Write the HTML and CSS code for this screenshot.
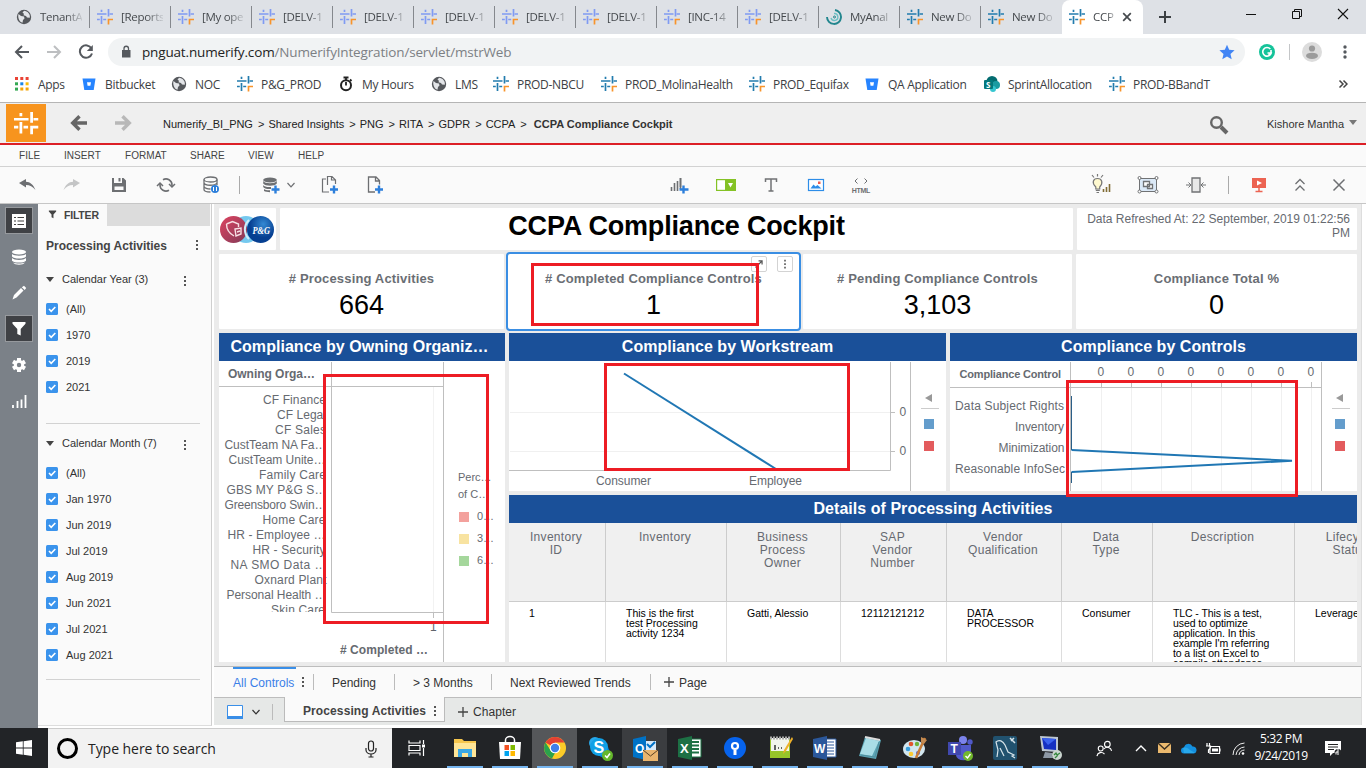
FILE: index.html
```html
<!DOCTYPE html>
<html lang="en">
<head>
<meta charset="utf-8">
<title>CCPA Compliance Cockpit</title>
<link rel="stylesheet" href="styles.css">
</head>
<body>
<svg class="defs" width="0" height="0">
  <symbol id="hash" viewBox="0 0 16 16"><g fill="none" stroke="currentColor" stroke-width="1.700"><path d="M0 5h9.500M12.700 5H16M4.500.7v2.200M4.500 7v8M11.500 0v7.500M0 10.500h2.800M6.200 10.500h3"/><path class="corner" d="M16 10.500h-4.500V15.500"/></g></symbol>
  <symbol id="globe" viewBox="0 0 16 16"><circle cx="8" cy="8" r="7.200" fill="#55585c"/><path d="M2.500 5l2.500 2 3 .5.500 2-1.500 1.500-.5 2.800C3.500 13 1.500 9 2.500 5zM8 1.800l-1.500 2 1.500 1-.5 1.500 2.500.7 1 1.500 2.800.3C14.500 5 11.500 2 8 1.800z" fill="#e3e5e8"/></symbol>
  <symbol id="bucket" viewBox="0 0 16 16"><path d="M1.500 2.500h13L12.700 14H3.300z" fill="#2684ff"/><path d="M6 6.200h4l-.6 3.600H6.600z" fill="#fff"/></symbol>
  <symbol id="plus" viewBox="0 0 10 10"><path d="M5 0v10M0 5h10" stroke="currentColor" stroke-width="1.300"/></symbol>
  <symbol id="dots" viewBox="0 0 4 14"><path d="M1 2h2v2H1zM1 6h2v2H1zM1 10h2v2H1z" fill="currentColor"/></symbol>
  <symbol id="check" viewBox="0 0 12 12"><rect width="12" height="12" rx="1.500" fill="#3a93ec"/><path d="M3 6l2.200 2.300L9.300 4" fill="none" stroke="#fff" stroke-width="1.600"/></symbol>
  <symbol id="chev" viewBox="0 0 10 10"><path d="M1.500 3L5 6.800 8.500 3" fill="none" stroke="currentColor" stroke-width="1.200"/></symbol>
  <symbol id="arrow" viewBox="0 0 16 16"><path d="M15 8H2M8 2L2 8l6 6" fill="none" stroke="currentColor" stroke-width="2"/></symbol>
  <symbol id="fatarrow" viewBox="0 0 18 18"><path d="M17 9H3M9.500 2.200L2.700 9l6.800 6.800" fill="none" stroke="currentColor" stroke-width="3.400"/></symbol>
  <symbol id="funnel" viewBox="0 0 16 16"><path d="M1.500 1h13v1.800L9.700 8v6.500L6.300 13V8L1.500 2.800z" fill="currentColor"/></symbol>
</svg>

<header class="tabs">
  <div class="tab"><svg><use href="#globe"/></svg><span>TenantA</span></div>
  <div class="tab pale"><svg><use href="#hash"/></svg><span>[Reports</span></div>
  <div class="tab pale"><svg><use href="#hash"/></svg><span>[My ope</span></div>
  <div class="tab pale"><svg><use href="#hash"/></svg><span>[DELV-1</span></div>
  <div class="tab pale"><svg><use href="#hash"/></svg><span>[DELV-1</span></div>
  <div class="tab pale"><svg><use href="#hash"/></svg><span>[DELV-1</span></div>
  <div class="tab pale"><svg><use href="#hash"/></svg><span>[DELV-1</span></div>
  <div class="tab pale"><svg><use href="#hash"/></svg><span>[DELV-1</span></div>
  <div class="tab pale"><svg><use href="#hash"/></svg><span>[INC-14</span></div>
  <div class="tab pale"><svg><use href="#hash"/></svg><span>[DELV-1</span></div>
  <div class="tab"><svg viewBox="0 0 16 16"><g fill="none" stroke="#22868e"><path d="M1 8a7 7 0 1 0 8-7" stroke-width="1.900"/><path d="M5 9a3.500 3.500 0 1 0 3-4.500" stroke="#6bc0c5" stroke-width="1.400"/><circle cx="8.500" cy="8" r="1"/></g></svg><span>MyAnal</span></div>
  <div class="tab"><svg><use href="#hash"/></svg><span>New Do</span></div>
  <div class="tab last"><svg><use href="#hash"/></svg><span>New Do</span></div>
  <div class="tab active"><svg><use href="#hash"/></svg><span>CCP</span><svg class="shut" viewBox="0 0 10 10"><path d="M1.200 1.200l7.600 7.600M8.800 1.200L1.200 8.800" stroke="#45494d" stroke-width="1.700"/></svg></div>
  <svg class="newtab" viewBox="0 0 12 12"><path d="M6 0v12M0 6h12" stroke="#3c4043" stroke-width="2"/></svg>
  <div class="wincontrols">
    <svg viewBox="0 0 12 12"><path d="M1 6.500h10" stroke="#111"/></svg>
    <svg viewBox="0 0 12 12"><path d="M1.500 3.500h7v7h-7zM3.500 3V1.500h7v7H9" fill="none" stroke="#111"/></svg>
    <svg viewBox="0 0 12 12"><path d="M1 1l10 10M11 1L1 11" stroke="#111" stroke-width="1.100"/></svg>
  </div>
</header>

<div class="address">
  <svg class="nav"><use href="#arrow"/></svg>
  <svg class="nav fwd"><use href="#arrow"/></svg>
  <svg class="nav reload" viewBox="0 0 16 16"><path d="M13.500 4.500A6.200 6.200 0 1 0 14 9.500" fill="none" stroke="#55595e" stroke-width="2"/><path d="M14.800 1v6h-6z" fill="#55595e"/></svg>
  <div class="pill">
    <svg class="lock" viewBox="0 0 10 13"><path d="M1 5h8.500v7.500H1z" fill="#55595e"/><path d="M3 5V3.500a2.200 2.200 0 0 1 4.500 0V5" fill="none" stroke="#55595e" stroke-width="1.300"/></svg>
    <span class="url"><b>pnguat.numerify.com</b>/NumerifyIntegration/servlet/mstrWeb</span>
    <svg class="star" viewBox="0 0 16 16"><path d="M8 .8l2.200 5 5.400.5-4.100 3.600 1.200 5.300L8 12.400l-4.700 2.800 1.200-5.300L.4 6.300l5.400-.5z" fill="#4285f4"/></svg>
  </div>
  <svg class="gram" viewBox="0 0 16 16"><circle cx="8" cy="8" r="8" fill="#15c39a"/><path d="M11.300 5A4.300 4.300 0 1 0 12.200 9H8.500M12 6v3l-2.500 2" fill="none" stroke="#fff" stroke-width="1.600"/></svg>
  <i class="vline"></i>
  <svg class="avatar" viewBox="0 0 20 20"><circle cx="10" cy="10" r="10" fill="#dcdcdc"/><circle cx="10" cy="6.500" r="3.100" fill="#9b9b9b"/><ellipse cx="10" cy="13.800" rx="6" ry="3.100" fill="#9b9b9b"/></svg>
  <svg class="kebab" viewBox="0 0 4 14"><g fill="#55595e"><circle cx="2" cy="2" r="1.700"/><circle cx="2" cy="7" r="1.700"/><circle cx="2" cy="12" r="1.700"/></g></svg>
</div>

<nav class="bookmarks">
  <div><svg viewBox="0 0 16 16"><g><path d="M1 1h3v3H1z" fill="#ea4335"/><path d="M6.300 1h3v3h-3z" fill="#ea4335"/><path d="M11.600 1h3v3h-3z" fill="#ea4335"/><path d="M1 6.300h3v3H1z" fill="#34a853"/><path d="M6.300 6.300h3v3h-3z" fill="#1a86e8"/><path d="M11.600 6.300h3v3h-3z" fill="#fbbc05"/><path d="M1 11.600h3v3H1z" fill="#34a853"/><path d="M6.300 11.600h3v3h-3zM11.600 11.600h3v3h-3z" fill="#f4a508"/></g></svg>Apps</div>
  <div><svg><use href="#bucket"/></svg>Bitbucket</div>
  <div><svg><use href="#globe"/></svg>NOC</div>
  <div><svg><use href="#hash"/></svg>P&amp;G_PROD</div>
  <div><svg viewBox="0 0 16 16"><circle cx="8" cy="9.300" r="5" fill="none" stroke="#222" stroke-width="2"/><path d="M8 6v3.500M5.500 1.500h5M8 1.500v2.500M12 3.500l1.500 1.500" stroke="#222" stroke-width="1.800"/></svg>My Hours</div>
  <div><svg><use href="#globe"/></svg>LMS</div>
  <div><svg><use href="#hash"/></svg>PROD-NBCU</div>
  <div><svg><use href="#hash"/></svg>PROD_MolinaHealth</div>
  <div><svg><use href="#hash"/></svg>PROD_Equifax</div>
  <div><svg><use href="#bucket"/></svg>QA Application</div>
  <div><svg viewBox="0 0 16 16"><circle cx="8" cy="5.500" r="5.500" fill="#036c70"/><circle cx="12" cy="9" r="4" fill="#1a9ba1"/><circle cx="9" cy="13" r="3" fill="#37c6d0"/><rect y="4" width="9" height="9" rx="1" fill="#03787c"/><text class="sp" x="2" y="11.500" font-size="8" font-weight="bold">S</text></svg>SprintAllocation</div>
  <div><svg><use href="#hash"/></svg>PROD-BBandT</div>
  <svg class="more" viewBox="0 0 10 10"><path d="M1.500 1.500L5 5 1.500 8.500M5.500 1.500L9 5 5.500 8.500" fill="none" stroke="#444" stroke-width="1.500"/></svg>
</nav>

<div class="appbar">
  <svg class="brand" viewBox="0 0 40 38"><rect width="40" height="38" fill="#f7941e"/><svg x="8" y="8" width="24.500" height="23" viewBox="0 0 16 16" preserveAspectRatio="none"><path d="M0 5h9.500M12.700 5H16M4.500.7v2.200M4.500 7v8M11.500 0v7.500M0 10.500h2.800M6.200 10.500h3M16 10.500h-4.500V15.500" fill="none" stroke="#fff" stroke-width="1.800"/></svg></svg>
  <svg class="back"><use href="#fatarrow"/></svg>
  <svg class="back next"><use href="#fatarrow"/></svg>
  <div class="crumbs"><span>Numerify_BI_PNG</span><i>&gt;</i><span>Shared Insights</span><i>&gt;</i><span>PNG</span><i>&gt;</i><span>RITA</span><i>&gt;</i><span>GDPR</span><i>&gt;</i><span>CCPA</span><i>&gt;</i><b>CCPA Compliance Cockpit</b></div>
  <svg class="search" viewBox="0 0 20 20"><circle cx="7.500" cy="7.500" r="5.300" fill="none" stroke="#666" stroke-width="2.400"/><path d="M12 12l6 6" stroke="#666" stroke-width="4"/></svg>
  <span class="user">Kishore Mantha</span><i class="caret"></i>
</div>

<div class="menubar"><span>FILE</span><span>INSERT</span><span>FORMAT</span><span>SHARE</span><span>VIEW</span><span>HELP</span></div>

<div class="toolbar">
  <svg viewBox="0 0 20 20"><path d="M2 8l7-4v2.700c4 0 7.500 3 9.500 8.300C15.500 11.800 13 10 9 10v2.500z" fill="#6d6f72"/></svg>
  <svg viewBox="0 0 20 20"><path d="M18 8l-7-4v2.700C7 6.700 3.500 9.700 1.500 15c3-3.200 5.500-5 9.500-5v2.500z" fill="#c4c5c6"/></svg>
  <svg viewBox="0 0 20 20"><path d="M3 3h2v5h8V3h1.500L17 5.500V17H3z" fill="#6d6f72"/><path d="M9.500 3h2v3.500h-2z" fill="#6d6f72"/><path d="M5.500 11.500h9V15h-9z" fill="#fafafa"/></svg>
  <svg viewBox="0 0 20 20"><g fill="none" stroke="#6d6f72" stroke-width="1.600"><path d="M7 4.700A6 6 0 0 1 16 10v1.500M13 15.300A6 6 0 0 1 4 10V8.500"/><path d="M13 9l3 3 3-3M7 11L4 8l-3 3" stroke-width="1.500"/></g></svg>
  <svg viewBox="0 0 20 20"><g fill="none" stroke="#6d6f72" stroke-width="1.300"><ellipse cx="9.500" cy="4.500" rx="6.500" ry="2.500"/><path d="M3 4.500v10c0 1.500 3 2.500 6.500 2.500M16 4.500V10M3 8c1 3 11 3 13 0M3 11.500c1 2 4 2.500 6.500 2.500"/></g><circle cx="14" cy="14" r="4" fill="#2d7fdb"/><path d="M12.500 12v4M15.500 12v4" stroke="#fff"/></svg>
  <i class="sep"></i>
  <svg viewBox="0 0 20 20"><ellipse cx="9" cy="5" rx="6.800" ry="2.600" fill="#6d6f72"/><path d="M2.200 6c2 3 11.500 3 13.600 0v2.500c-2 3-11.500 3-13.600 0zM2.200 10c1 1.800 4 2.200 7.800 2v2c-4 .3-7-.5-7.800-2zM3 14c1 1 4 1.500 6 1.200v2c-2 0-5-.5-6-1.200z" fill="#6d6f72"/><path d="M14.500 10.500v8M10.500 14.500h8" stroke="#2d7fdb" stroke-width="2.400"/></svg>
  <svg class="small"><use href="#chev"/></svg>
  <svg viewBox="0 0 20 20"><path d="M9 17H2.500V4H6M7.500 10V1.500H12L15.500 5v4M11.500 1.500V5H15" fill="none" stroke="#6d6f72" stroke-width="1.200"/><path d="M14 10.500v8M10 14.500h8" stroke="#2d7fdb" stroke-width="2.400"/></svg>
  <svg viewBox="0 0 20 20"><path d="M10 17H3.500V2H11l3.500 3.500v4M10.500 2v4h4" fill="none" stroke="#6d6f72" stroke-width="1.300"/><path d="M14 10.500v8M10 14.500h8" stroke="#2d7fdb" stroke-width="2.400"/></svg>
  <svg viewBox="0 0 20 20"><path d="M1.500 16v-4M4.500 16V8M7.500 16V6M10.500 12V3" stroke="#6d6f72" stroke-width="1.600"/><path d="M10.500 3V14" stroke="#6d6f72" stroke-width="1.600"/><path d="M13.500 10.500v8M9.500 14.500h9" stroke="#2d7fdb" stroke-width="2.400"/></svg>
  <svg viewBox="0 0 20 20"><rect x=".6" y="4.600" width="18.800" height="10.800" fill="#fff" stroke="#84c225" stroke-width="1.200"/><path d="M9 4h11v12H9z" fill="#84c225"/><path d="M12 8h5l-2.500 4.500z" fill="#fff"/></svg>
  <svg viewBox="0 0 20 20"><path d="M4.500 7V4h11v3M10 4v12M7.500 16h5" fill="none" stroke="#707274" stroke-width="1.500"/></svg>
  <svg viewBox="0 0 20 20"><rect x="2.500" y="4.500" width="15" height="11" fill="#fff" stroke="#2d8de8" stroke-width="1.200"/><path d="M4.500 13.500l3-4 2 2 2-1.500 4 3.500z" fill="#2d8de8"/><path d="M12 6.500h2.500V9H12z" fill="#ef5b4d"/></svg>
  <svg viewBox="0 0 20 20"><path d="M6.500 3.500L4 6l2.500 2.500M13.500 3.500L16 6l-2.500 2.500" fill="none" stroke="#6d6f72"/><text x=".8" y="18" font-size="7" font-weight="bold" fill="#6d6f72" textLength="18.500">HTML</text></svg>
  <svg viewBox="0 0 20 20"><path d="M4.800 12C.5 8 2 3.500 6.500 3.500S12.500 8 8.700 12v2H4.800z" fill="#fff9cf" stroke="#777" stroke-width="1.200"/><path d="M4.800 15.300h4M5.500 17.500h2.500M6.500 1.500V-1M3 2.500L1 0M10 2.500l2-2.500" stroke="#777" stroke-width="1.200"/><path d="M12.500 17v-3M15.500 17v-5M18.500 17V9" stroke="#806c35" stroke-width="1.600"/></svg>
  <svg class="wide" viewBox="0 0 22 20"><rect x="2.500" y="3.500" width="17" height="13" fill="#dbe9f7" stroke="#707274"/><path d="M6.500 6.500h6v5h-6zM10.500 9.500h5v4h-5z" fill="#fff" stroke="#707274" stroke-width="1.300"/><g fill="#fff" stroke="#707274"><circle cx="2.500" cy="3" r="1.500"/><circle cx="19.500" cy="3" r="1.500"/><circle cx="2.500" cy="16.500" r="1.500"/><circle cx="19.500" cy="16.500" r="1.500"/></g></svg>
  <svg viewBox="0 0 20 20"><path d="M6 3h8v14H6z" fill="#e8e8e8" stroke="#707274" stroke-width="1.300"/><path d="M0 10h4M2.500 7.500L5 10l-2.500 2.500M20 10h-4M17.500 7.500L15 10l2.500 2.500" fill="none" stroke="#707274"/></svg>
  <i class="sep two"></i>
  <svg viewBox="0 0 20 20"><path d="M3 3h14v10H3z" fill="#ec6352"/><path d="M8 5.500l5 2.500-5 2.500z" fill="#fff"/><path d="M10 13v3.500M6.500 16.500h7" stroke="#ec6352" stroke-width="1.500"/></svg>
  <svg viewBox="0 0 20 20"><path d="M5.500 9L10 4.500 14.500 9M5.500 15.500L10 11l4.500 4.500" fill="none" stroke="#6d6f72" stroke-width="1.300"/></svg>
  <svg viewBox="0 0 20 20"><path d="M4.500 4.500l11 11M15.500 4.500l-11 11" stroke="#6d6f72" stroke-width="1.500"/></svg>
</div>

<div class="workspace">
  <aside class="rail">
    <div class="on"><svg viewBox="0 0 16 16"><path d="M1 1h14v14H1z" fill="#fff"/><path d="M3 4.500h2M6.500 4.500H13M3 8h2M6.500 8H13M3 11.500h2M6.500 11.500H13" stroke="#444" stroke-width="1.200"/></svg></div>
    <div><svg viewBox="0 0 16 16"><g fill="#fff"><ellipse cx="8" cy="3" rx="7" ry="2.500"/><path d="M1 5c2 2.300 12 2.300 14 0v2.500c-2 2.800-12 2.800-14 0zM1 9c2 2.500 12 2.500 14 0v2.700c-2 2.500-12 2.500-14 0zM2 13.500c3 1.300 9 1.300 12 0-2 3-10 3-12 0z"/></g></svg></div>
    <div><svg viewBox="0 0 16 16"><path d="M1.500 14.500l1.500-4.500 7-7 2.500 2.500-7 7zM10.800 2.200L13 .8 15.200 3l-1.500 2z" fill="#fff"/></svg></div>
    <div class="on"><svg color="#fff"><use href="#funnel"/></svg></div>
    <div><svg viewBox="0 0 16 16"><path d="M8 1v14M2 4.500l12 7M2 11.500l12-7" stroke="#fff" stroke-width="4"/><circle cx="8" cy="8" r="5.200" fill="#fff"/><circle cx="8" cy="8" r="2.200" fill="#7b8188"/></svg></div>
    <div><svg viewBox="0 0 16 16"><path d="M2 15v-3M6.500 15V8M10.500 15V6.500M14.500 15V2" stroke="#fff" stroke-width="1.800"/></svg></div>
  </aside>

  <section class="filter">
    <div class="ftop"><div class="ftab"><svg><use href="#funnel"/></svg>FILTER</div></div>
    <div class="ftitle">Processing Activities<svg class="kd"><use href="#dots"/></svg></div>
    <div class="fgroup">
      <div class="fhead"><i></i>Calendar Year (3)<svg class="kd"><use href="#dots"/></svg></div>
      <label><svg><use href="#check"/></svg>(All)</label>
      <label><svg><use href="#check"/></svg>1970</label>
      <label><svg><use href="#check"/></svg>2019</label>
      <label><svg><use href="#check"/></svg>2021</label>
    </div>
    <div class="fgroup month">
      <div class="fhead"><i></i>Calendar Month (7)<svg class="kd"><use href="#dots"/></svg></div>
      <label><svg><use href="#check"/></svg>(All)</label>
      <label><svg><use href="#check"/></svg>Jan 1970</label>
      <label><svg><use href="#check"/></svg>Jun 2019</label>
      <label><svg><use href="#check"/></svg>Jul 2019</label>
      <label><svg><use href="#check"/></svg>Aug 2019</label>
      <label><svg><use href="#check"/></svg>Jun 2021</label>
      <label><svg><use href="#check"/></svg>Jul 2021</label>
      <label><svg><use href="#check"/></svg>Aug 2021</label>
    </div>
  </section>

  <main class="stage">
    <div class="board">
      <div class="row r1">
        <div class="card logo"><svg viewBox="0 0 57 42">
          <defs><linearGradient id="red" x2="1" y2="1"><stop offset="0" stop-color="#de4360"/><stop offset="1" stop-color="#813b58"/></linearGradient><radialGradient id="blue" cx=".6" cy=".3"><stop offset="0" stop-color="#3489d3"/><stop offset="1" stop-color="#063f91"/></radialGradient></defs>
          <circle cx="27" cy="21.500" r="13.500" fill="#75c9ef"/><circle cx="14.500" cy="21.500" r="13.500" fill="url(#red)"/><circle cx="41.500" cy="21.500" r="13.500" fill="url(#blue)"/><path d="M30 12a13 13 0 0 0 0 19" fill="none" stroke="#d1edfa" stroke-width="2"/>
          <path d="M7.500 16l6-2.500 6 2.500v3M7.500 16c0 5 2 9 7.500 12M16 21l6-1v6l-5 2zM18 24l3-1" fill="none" stroke="#f7dfe4" stroke-width="1.400"/>
          <text x="33.500" y="25.500" font-size="10" font-weight="bold" font-style="italic" font-family="Liberation Serif, serif" fill="#fff" textLength="17.500" lengthAdjust="spacingAndGlyphs">P&amp;G</text></svg></div>
        <div class="card title">CCPA Compliance Cockpit</div>
        <div class="card date">Data Refreshed At: 22 September, 2019 01:22:56 PM</div>
      </div>
      <div class="row r2">
        <div class="card kpi k1"><b>#&nbsp;Processing Activities</b><span>664</span></div>
        <div class="card kpi k2 selected"><b>#&nbsp;Completed Compliance Controls</b><span>1</span>
          <div class="kbtns"><svg viewBox="0 0 16 16"><path d="M4 12l7-7M7.500 4.500h4v4" fill="none" stroke="#555" stroke-width="1.400"/></svg><svg viewBox="0 0 16 16"><path d="M7 3h2v2H7zM7 7h2v2H7zM7 11h2v2H7z" fill="#666"/></svg></div>
          <div class="mark m1"></div></div>
        <div class="card kpi k3"><b>#&nbsp;Pending Compliance Controls</b><span>3,103</span></div>
        <div class="card kpi k4"><b>Compliance Total %</b><span>0</span></div>
      </div>
      <div class="row r3">
        <section class="panel owning"><h2>Compliance by Owning Organiz…</h2>
          <svg class="chart" viewBox="219 361 286 301" width="286" height="301">
            <path d="M219 386.500h224M331.500 362v250.500H443M443.500 362v300M433.500 612v6" fill="none" stroke="#bfbfbf"/><path d="M433.500 387v225" stroke="#f2f2f2"/>
            <text class="hd" x="228" y="378" textLength="87">Owning Orga…</text>
            <clipPath id="rows"><path d="M219 380h109v232H219z"/></clipPath>
            <g class="lbl" clip-path="url(#rows)"><text x="263" y="404" textLength="63">CF Finance</text><text x="277" y="419" textLength="49">CF Legal</text><text x="275" y="434" textLength="51">CF Sales</text><text x="224.500" y="449" textLength="102">CustTeam NA Fa…</text><text x="228.500" y="464" textLength="97">CustTeam Unite…</text><text x="259" y="479" textLength="67">Family Care</text><text x="226.500" y="494" textLength="100">GBS MY P&amp;G S…</text><text x="224.500" y="509" textLength="102">Greensboro Swin…</text><text x="262.500" y="524" textLength="63">Home Care</text><text x="227.500" y="539" textLength="98">HR - Employee …</text><text x="252.500" y="554" textLength="73">HR - Security</text><text x="230.500" y="569" textLength="96">NA SMO Data …</text><text x="254.500" y="584" textLength="72">Oxnard Plant</text><text x="226.500" y="599" textLength="100">Personal Health …</text><text x="271" y="614" textLength="54">Skin Care</text></g>
            <text class="hd" x="340" y="654" textLength="88"># Completed …</text>
            <text x="430" y="631" font-size="12" fill="#60656b">1</text>
            <g font-size="11" fill="#666a70"><text x="458" y="481">Perc…</text><text x="458" y="498">of C…</text><text x="477" y="520">0…</text><text x="477" y="542">3…</text><text x="477" y="564">6…</text></g>
            <path d="M459 512h10v10h-10z" fill="#f3a19d"/><path d="M459 534h10v10h-10z" fill="#f8e3a1"/><path d="M459 556h10v10h-10z" fill="#a5d79c"/>
          </svg><div class="mark m2"></div>
        </section>
        <div class="right">
          <div class="charts">
            <section class="panel stream"><h2>Compliance by Workstream</h2>
              <svg class="chart" viewBox="509 361 437 130" width="437" height="130">
                <path d="M510 412.500h380M510 451.500h380" stroke="#f0f0f0"/><path d="M509 470.500h381.500V362M890 412.500h5M890 451.500h5M910.500 362v129" fill="none" stroke="#bfbfbf"/>
                <path d="M624 373.500L776 469" stroke="#2077b4" stroke-width="2"/>
                <g class="lbl"><text x="596" y="485" textLength="55">Consumer</text><text x="749" y="485" textLength="53">Employee</text><text x="899.500" y="416">0</text><text x="899.500" y="455">0</text></g>
                <path d="M925 398l7-4v8z" fill="#999"/><path d="M921 408.500h18" stroke="#ccc"/><path d="M924 419h10v10h-10z" fill="#649dcc"/><path d="M924 441h10v10h-10z" fill="#e35b5d"/>
              </svg><div class="mark m3"></div>
            </section>
            <section class="panel controls"><h2>Compliance by Controls</h2>
              <svg class="chart" viewBox="950 361 407 130" width="407" height="130">
                <path d="M1101.500 388v103M1131.500 388v103M1161.500 388v103M1191.500 388v103M1221.500 388v103M1251.500 388v103M1281.500 388v103M1311.500 388v103" stroke="#f0f0f0"/>
                <path d="M950 387.500h371M1070.500 362v129M1321.500 362v129M1101.500 382v5M1131.500 382v5M1161.500 382v5M1191.500 382v5M1221.500 382v5M1251.500 382v5M1281.500 382v5M1311.500 382v5" fill="none" stroke="#bfbfbf"/>
                <path d="M1071.500 450L1292 460.800 1071.500 472" fill="none" stroke="#2077b4" stroke-width="2" stroke-linejoin="bevel"/><path d="M1071.500 396v54M1071.500 472v11" stroke="#2b5f88"/>
                <text class="hd" x="959.500" y="378" textLength="101.500">Compliance Control</text>
                <g class="lbl"><text x="955" y="410" textLength="109">Data Subject Rights</text><text x="1015" y="431" textLength="49">Inventory</text><text x="998.500" y="452" textLength="66">Minimization</text><text x="955" y="473" textLength="110">Reasonable InfoSec</text>
                <text x="1097.500" y="376">0</text><text x="1127.500" y="376">0</text><text x="1157.500" y="376">0</text><text x="1187.500" y="376">0</text><text x="1217.500" y="376">0</text><text x="1247.500" y="376">0</text><text x="1277.500" y="376">0</text><text x="1307.500" y="376">0</text></g>
                <path d="M1336 398l7-4v8z" fill="#999"/><path d="M1332 408.500h18" stroke="#ccc"/><path d="M1335 419h10v10h-10z" fill="#649dcc"/><path d="M1335 441h10v10h-10z" fill="#e35b5d"/>
              </svg><div class="mark m4"></div>
            </section>
          </div>
          <section class="panel details"><h2>Details of Processing Activities</h2>
            <div class="grid">
              <div class="th">Inventory<br>ID</div><div class="th">Inventory</div><div class="th">Business<br>Process<br>Owner</div><div class="th">SAP<br>Vendor<br>Number</div><div class="th">Vendor<br>Qualification</div><div class="th">Data<br>Type</div><div class="th">Description</div><div class="th">Lifecycle<br>Status</div>
              <div class="td">1</div><div class="td">This is the first<br>test Processing<br>activity 1234</div><div class="td">Gatti, Alessio</div><div class="td">12112121212</div><div class="td">DATA<br>PROCESSOR</div><div class="td">Consumer</div><div class="td">TLC - This is a test,<br>used to optimize<br>application. In this<br>example I'm referring<br>to a list on Excel to<br>compile attendance</div><div class="td">Leveraged</div>
            </div>
          </section>
        </div>
      </div>
    </div>
    <div class="pagetabs"><span class="cur">All Controls</span><svg class="kd"><use href="#dots"/></svg><i></i><span class="p1">Pending</span><i></i><span class="p2">&gt; 3 Months</span><i></i><span class="p3">Next Reviewed Trends</span><i></i><svg class="add"><use href="#plus"/></svg><span>Page</span></div>
    <div class="chapters">
      <div class="view"><svg viewBox="0 0 16 14"><path d="M.5.500h15v13H.5z" fill="#fff" stroke="#3a8fe8" stroke-width="1"/><path d="M0 11h16v3H0z" fill="#3a8fe8"/></svg><svg class="cv"><use href="#chev"/></svg><i></i></div>
      <div class="chap">Processing Activities<svg class="kd"><use href="#dots"/></svg></div>
      <svg class="add"><use href="#plus"/></svg><span>Chapter</span>
    </div>
  </main>
</div>

<footer class="taskbar">
  <div class="start"><svg viewBox="0 0 16 16"><path d="M0 2.300l6.800-1v6.300H0zM7.600 1.200L16 0v7.600H7.600zM0 8.400h6.800v6.300L0 13.700zM7.600 8.400H16V16l-8.400-1.200z" fill="#fff"/></svg></div>
  <div class="find"><i class="ring"></i><span>Type here to search</span><svg viewBox="0 0 12 18"><rect x="3.500" y="1" width="5" height="10" rx="2.500" fill="none" stroke="#222" stroke-width="1.200"/><path d="M1 8v2a5 4 0 0 0 10 0V8M6 14v3M3.500 17h5" fill="none" stroke="#222" stroke-width="1.200"/></svg></div>
  <div class="tv"><svg viewBox="0 0 18 18"><path d="M1 1.500V4h11V1.500M1 6.500h11v5H1zM1 16.500V14h11v2.500M15.500 1v4M15.500 9v8" fill="none" stroke="#fff" stroke-width="1.200"/><path d="M14 5.500h3v3h-3z" fill="#fff"/></svg></div>
  <div class="apps">
    <div><svg viewBox="0 0 24 24"><path d="M1 3h8l2 2h12v16H1z" fill="#f6c64d"/><path d="M1 7h22v14H1z" fill="#ffe596"/><path d="M5 21v-8h14v8h-4v-4H9v4z" fill="#3ba8e4"/></svg></div>
    <div><svg viewBox="0 0 24 24"><path d="M7.500 6V4a4.500 3.500 0 0 1 9 0v2" fill="none" stroke="#fff" stroke-width="1.500"/><path d="M1 6h22l-1 17H2z" fill="#fff"/><path d="M6.500 9H11v5H6.500z" fill="#f25022"/><path d="M12.500 9H17v5h-4.500z" fill="#7fba00"/><path d="M6.500 15H11v5H6.500z" fill="#00a4ef"/><path d="M12.500 15H17v5h-4.500z" fill="#ffb900"/></svg></div>
    <div class="hot"><svg viewBox="0 0 24 24"><circle cx="12" cy="12" r="11" fill="#fccb28"/><path d="M12 12L2.500 6.500A11 11 0 0 1 21.500 6.500H12z" fill="#e34133"/><path d="M2.500 6.500L8 15l4 2-3 5.500A11 11 0 0 1 2.500 6.500z" fill="#2ba24c"/><circle cx="12" cy="12" r="5.300" fill="#fff"/><circle cx="12" cy="12" r="4.200" fill="#3f7fe8"/></svg></div>
    <div><svg viewBox="0 0 24 24"><circle cx="7" cy="7" r="6" fill="#28a8ea"/><circle cx="15.500" cy="15.500" r="6" fill="#0078d4"/><circle cx="11" cy="11" r="9" fill="#10a0e6"/><text x="5.500" y="17" font-size="16" font-weight="bold" fill="#fff">S</text><circle cx="19.500" cy="19.500" r="5.500" fill="#65b72c"/><path d="M17 19.500l2 2 3-4" fill="none" stroke="#fff" stroke-width="1.500"/></svg></div>
    <div class="warm"><svg viewBox="0 0 24 24"><path d="M10 5h13v12H10z" fill="#d9eafa"/><path d="M0 3l13-3v24L0 21z" fill="#0072c6"/><text x="2" y="16.500" font-size="12" font-weight="bold" fill="#fff">O</text><path d="M14 8l3 3 5-5" stroke="#0072c6" stroke-width="2" fill="none"/><path d="M10 14h15v11H10z" fill="#eab56e"/><path d="M10 14l7.500 6 7.500-6" fill="none" stroke="#5a4226"/></svg></div>
    <div><svg viewBox="0 0 24 24"><path d="M12 3h11v18H12z" fill="#fff" stroke="#1d7044"/><path d="M14 6h7M14 9.500h7M14 13h7M14 16.500h7" stroke="#1d7044" stroke-width="2"/><path d="M0 3l14-3v24L0 21z" fill="#1d7044"/><text x="2" y="17" font-size="13" font-weight="bold" fill="#fff">X</text></svg></div>
    <div><svg viewBox="0 0 24 24"><circle cx="12" cy="12" r="11" fill="#0763ec"/><path d="M12 14v5" stroke="#fff" stroke-width="3"/><circle cx="12" cy="10" r="3" fill="none" stroke="#fff" stroke-width="2.200"/></svg></div>
    <div><svg viewBox="0 0 24 24"><path d="M2 2h20v20H2z" fill="#f2f5ec"/><path d="M2 15h20v7H2z" fill="#97c529"/><path d="M2.500 2v20M21.500 2v20" stroke="#97c529"/><path d="M2 2h20" stroke="#aaa" stroke-width="3" stroke-dasharray="2 1"/><path d="M7 9v5M10 12h1M13 12h1" stroke="#333" stroke-width="1.500"/><path d="M24 1l-8 13-1 4 3-3 7-12z" fill="#efb12a"/></svg></div>
    <div><svg viewBox="0 0 24 24"><path d="M12 3h11v18H12z" fill="#fff" stroke="#2b579a"/><path d="M14 6h7M14 9h7M14 12h7M14 15h7M14 18h7" stroke="#2b579a"/><path d="M0 3l14-3v24L0 21z" fill="#2b579a"/><text x="1" y="16.500" font-size="12" font-weight="bold" fill="#fff">W</text></svg></div>
    <div><svg viewBox="0 0 24 24"><path d="M7 1l16 3-5 19-17-3z" fill="#5ba4b4"/><path d="M8 2l13 3-7 15L2 18z" fill="#a9dde6"/><path d="M7 1l15 3" stroke="#ddd" stroke-width="2"/><path d="M3 19l14 2 4-15" fill="none" stroke="#4f8e9e"/></svg></div>
    <div><svg viewBox="0 0 24 24"><ellipse cx="11" cy="13" rx="11" ry="9" fill="#d2e6ef"/><circle cx="5" cy="13" r="2.300" fill="#3a9ddb"/><circle cx="8" cy="8" r="2.300" fill="#e2552d"/><circle cx="14" cy="8" r="2.200" fill="#6fb33b"/><circle cx="8" cy="18" r="2.300" fill="#fbcc33"/><circle cx="15" cy="17" r="2" fill="#5961c7"/><path d="M22 2l-6 13-3 7" stroke="#c77c37" stroke-width="2.500" fill="none"/><path d="M18 1l6 3-3 4-3-2z" fill="#c48b52"/></svg></div>
    <div><svg viewBox="0 0 24 24"><circle cx="15" cy="4" r="4" fill="#7b83eb"/><circle cx="22" cy="6" r="2.700" fill="#5059c9"/><path d="M8 9h15v10a7 5 0 0 1-15 0z" fill="#5059c9"/><path d="M0 6h13v13H0z" fill="#4048ae"/><text x="2.500" y="17" font-size="12" font-weight="bold" fill="#fff">T</text><circle cx="20" cy="20" r="5" fill="#72b72d"/><path d="M17.500 20l2 2 3-4" fill="none" stroke="#fff" stroke-width="1.400"/></svg></div>
    <div><svg viewBox="0 0 24 24"><rect width="24" height="24" rx="2" fill="#21526f"/><path d="M4 21l1-7-2-8c3-3 7-1 9 3l3 7 6 3-2 1 3 2M7 12l4 8" fill="none" stroke="#d7e4ea" stroke-width="1.200"/><path d="M17 2l5 5M21 2l-3 3" stroke="#d7e4ea" stroke-width="1.500"/></svg></div>
    <div><svg viewBox="0 0 24 24"><path d="M2 0l18 1v15L4 15z" fill="#bdc7d2"/><path d="M4 2l14 1v11L6 13z" fill="#1631c2"/><path d="M4 2l14 1-8 6z" fill="#3a62ef"/><path d="M7 16l7 1v4l5 1H5z" fill="#8d98a5"/><circle cx="19" cy="19" r="5" fill="#cbd5d0"/><path d="M16 19l2-2 1 2 3-2M17 22l3-3" stroke="#35863d" fill="none" stroke-width="1.300"/></svg></div>
  </div>
  <div class="tray">
    <svg class="people" viewBox="0 0 18 18"><g fill="none" stroke="#fff" stroke-width="1.200"><circle cx="12" cy="4.500" r="3"/><circle cx="5" cy="9" r="2.600"/><path d="M1 17a4.500 4.500 0 0 1 8-2M8.500 9.500a4.500 4.500 0 0 1 8 2"/></g></svg>
    <svg class="up" viewBox="0 0 12 8"><path d="M1 7l5-5 5 5" fill="none" stroke="#fff" stroke-width="1.400"/></svg>
    <svg class="mail" viewBox="0 0 13 10"><path d="M0 0h13v10H0z" fill="#ebb96e"/><path d="M0 0l6.500 6L13 0" fill="none" stroke="#3a3022" stroke-width="1.300"/></svg>
    <svg class="cloud" viewBox="0 0 16 11"><path d="M3 10.500a3 3 0 0 1 0-6 4.500 4.500 0 0 1 8.500-1 3.600 3.600 0 0 1 1.500 7z" fill="#1490df"/><path d="M2 5c3-1 5 0 7 2l5 3H3z" fill="#28a8ea"/></svg>
    <svg class="batt" viewBox="0 0 16 13"><path d="M5 4.500h9.500v7H5zM15 6.500v3M2 1v3M4.500 1v3M1 4h4.500v2l-2 2v3" fill="none" stroke="#fff" stroke-width="1.200"/><path d="M7 6.500h6v3H7z" fill="#fff"/></svg>
    <svg class="wifi" viewBox="0 0 13 13"><g fill="none" stroke="#eee"><path d="M1 13A12 12 0 0 1 12.500 1"/><path d="M4 13a9 9 0 0 1 8.500-8"/><path d="M7 13a6 6 0 0 1 5.500-5"/></g><circle cx="11" cy="11.500" r="1.300" fill="#fff"/></svg>
    <div class="clock"><span>5:32 PM</span><span>9/24/2019</span></div>
    <svg class="note" viewBox="0 0 17 17"><path d="M0 1h16v12H8l-3 3v-3H0z" fill="#fff"/><path d="M3 4.500h10M3 7h10M3 9.500h6" stroke="#222"/><circle cx="13" cy="12.500" r="3.500" fill="#242628"/><path d="M13 9v6M13 12h-2v2.500" stroke="#fff" fill="none"/></svg>
  </div>
</footer>
</body>
</html>
```
FILE: styles.css
```css
* { box-sizing: border-box; }
body { margin: 0; width: 1366px; height: 768px; overflow: hidden; background: #fff; font-family: "Liberation Sans", Arial, sans-serif; color: #333; }
.defs { position: absolute; }
svg { display: block; flex: none; }
i { font-style: normal; flex: none; }

/* Browser tabs */
.tabs { display: flex; height: 34px; padding-left: 9px; background: #dee1e6; font: 11.500px "Open Sans", sans-serif; letter-spacing: -.3px; }
.tab { display: flex; width: 81px; padding: 9px 0 0 7px; border-right: 1px solid #85888d; border-image: linear-gradient(#dee1e6 7px, #85888d 7px, #85888d 27px, #dee1e6 27px) 1; }
.tab > svg { width: 16px; height: 16px; }
.tab span { width: 42px; margin-left: 8px; overflow: hidden; white-space: nowrap; line-height: 16px; -webkit-mask-image: linear-gradient(90deg, #000 60%, rgba(0,0,0,.15) 100%); mask-image: linear-gradient(90deg, #000 60%, rgba(0,0,0,.15) 100%); }
.tab, .bookmarks { color: #237cae; }
.tab span { color: #45494d; }
.corner { stroke: #f8942b; }
.tab.pale { color: #809bf2; }
.tab.last { border: 0; }
.tab.active { width: 81px; border: 0; background: #fff; border-radius: 8px 8px 0 0; }
.tab.active span { width: 23px; }
.tab .shut { width: 10px; height: 10px; margin: 3px 0 0 6px; }
.newtab { width: 12px; height: 12px; margin: 11px 0 0 16px; }
.wincontrols { display: flex; gap: 34px; margin: 8px 0 0 74px; }
.wincontrols svg { width: 12px; height: 12px; }

.address { display: flex; align-items: center; height: 35px; padding-left: 14px; }
.nav { width: 16px; height: 16px; color: #55595e; }
.nav.fwd { margin-left: 16px; color: #bdbfc1; transform: scaleX(-1); }
.nav.reload { margin-left: 16px; }
.pill { display: flex; align-items: center; width: 1137px; height: 28px; margin-left: 14px; padding-left: 13px; border-radius: 14px; background: #f1f3f4; font: 13.500px "Open Sans", sans-serif; color: #7c8084; }
.lock { width: 10px; height: 13px; }
.url { width: 1050px; margin-left: 11px; letter-spacing: -.16px; }
.url b { font-weight: 400; color: #222; }
.star { width: 16px; height: 16px; margin-left: auto; margin-right: 10px; }
.gram { width: 16px; height: 16px; margin-left: 14px; }
.vline { width: 1px; height: 16px; margin-left: 14px; background: #c4c6c8; }
.avatar { width: 20px; height: 20px; margin-left: 12px; }
.kebab { width: 4px; height: 14px; margin-left: 21px; }

.bookmarks { display: flex; align-items: center; height: 33px; padding: 0 0 3px 14px; font: 12px "Open Sans", sans-serif; letter-spacing: -.3px; }
.bookmarks div { display: flex; align-items: center; width: 101px; white-space: nowrap; -webkit-text-fill-color: #3c4043; }
.bookmarks .sp { fill: #fff; -webkit-text-fill-color: #fff; }
.bookmarks svg { width: 16px; height: 16px; margin-right: 8px; }
.bookmarks div:nth-child(1) { width: 67px; }
.bookmarks div:nth-child(2) { width: 90px; }
.bookmarks div:nth-child(3) { width: 66px; }
.bookmarks div:nth-child(5) { width: 93px; }
.bookmarks div:nth-child(6) { width: 62px; }
.bookmarks div:nth-child(7) { width: 108px; }
.bookmarks div:nth-child(8) { width: 148px; }
.bookmarks div:nth-child(9) { width: 115px; }
.bookmarks div:nth-child(10) { width: 120px; }
.bookmarks div:nth-child(11) { width: 125px; }
.bookmarks .more { width: 10px; height: 10px; margin: 0 0 0 128px; }

/* Application header */
.appbar { display: flex; align-items: center; height: 43px; padding-left: 6px; background: #efefef; border-top: 1px solid #b5b5b5; border-bottom: 2px solid #dc1f26; font-size: 11px; }
.brand { width: 40px; height: 38px; }
.back { width: 18px; height: 18px; margin-left: 24px; color: #666; }
.back.next { margin-left: 26px; color: #b8b8b8; transform: scaleX(-1); }
.crumbs { display: flex; width: 547px; margin-left: 31px; white-space: nowrap; color: #222; margin-top: 1px; }
.crumbs span { letter-spacing: -.04px; }
.crumbs i { width: 15.500px; padding-left: 5px; }
.crumbs b { margin-left: 3px; color: #333; }
.search { width: 20px; height: 20px; margin: 3px 0 0 499px; }
.user { width: 78px; margin: 2px 0 0 38px; white-space: nowrap; }
.caret { border: 4px solid transparent; border-top: 5px solid #777; border-bottom: 0; margin: 0 0 2px 4px; }

.menubar { display: flex; align-items: center; height: 22px; padding-left: 19px; background: #fafafa; border-bottom: 1px solid #d2d2d2; font-size: 10px; color: #444; letter-spacing: .05px; }
.menubar span { width: 61px; }
.menubar span:nth-child(1) { width: 45px; }
.menubar span:nth-child(3) { width: 65px; }
.menubar span:nth-child(4) { width: 58px; }
.menubar span:nth-child(5) { width: 50px; }

.toolbar { display: flex; align-items: center; height: 37px; background: #fafafa; border-bottom: 1px solid #c6c6c6; color: #6d6f72; }
.toolbar svg { width: 20px; height: 20px; overflow: visible; }
.toolbar svg:nth-of-type(1) { margin-left: 17px; }
.toolbar svg:nth-of-type(2) { margin-left: 25px; }
.toolbar svg:nth-of-type(3) { margin-left: 27px; }
.toolbar svg:nth-of-type(4) { margin-left: 27px; }
.toolbar svg:nth-of-type(5) { margin-left: 25px; }
.toolbar .sep { width: 1px; height: 18px; margin-left: 18px; background: #aaa; }
.toolbar svg:nth-of-type(6) { margin-left: 21px; }
.toolbar svg.small { width: 10px; height: 10px; margin-left: 5px; }
.toolbar svg:nth-of-type(8) { margin-left: 24px; }
.toolbar svg:nth-of-type(9) { margin-left: 25px; }
.toolbar svg:nth-of-type(10) { margin-left: 285px; }
.toolbar svg:nth-of-type(11) { margin-left: 26px; }
.toolbar svg:nth-of-type(12) { margin-left: 25px; }
.toolbar svg:nth-of-type(13) { margin-left: 25px; }
.toolbar svg:nth-of-type(14) { margin-left: 25px; }
.toolbar svg:nth-of-type(15) { margin-left: 220px; }
.toolbar svg.wide { width: 22px; margin-left: 26px; }
.toolbar svg:nth-of-type(17) { margin-left: 27px; }
.toolbar .sep.two { margin-left: 22px; }
.toolbar svg:nth-of-type(18) { margin-left: 20px; }
.toolbar svg:nth-of-type(19) { margin-left: 21px; }
.toolbar svg:nth-of-type(20) { margin-left: 19px; }

.workspace { display: flex; height: 524px; }
.rail { display: flex; flex-direction: column; gap: 9px; width: 38px; padding: 3px 0 0 5px; background: #7b8188; }
.rail div { display: grid; place-items: center; width: 28px; height: 27px; border: 1px solid transparent; }
.rail .on { background: #3f4145; border-color: #96999d; }
.rail svg { width: 16px; height: 16px; }

.filter { width: 174px; height: 522px; background: #fafafa; border-right: 1px solid #cfcfcf; border-bottom: 1px solid #ddd; font-size: 11px; color: #333; }
.ftop { height: 22px; width: 172px; background: #dcdcdc; }
.ftab { display: flex; align-items: center; width: 69px; height: 22px; padding: 0 0 1px 10px; background: #fafafa; font-weight: bold; font-size: 10.500px; color: #444; letter-spacing: -.2px; }
.ftab svg { width: 9px; height: 11px; margin-right: 7px; }
.kd { width: 4px; height: 14px; color: #555; }
.ftitle { display: flex; height: 38px; padding: 12px 12px 0 8px; font-size: 12px; font-weight: bold; color: #444; white-space: nowrap; line-height: 16px; }
.ftitle .kd { margin: 0 0 0 auto; }
.fgroup { width: 154px; height: 160px; margin-left: 8px; border-bottom: 1px solid #d2d2d2; }
.fgroup.month { height: 256px; }
.fhead { display: flex; align-items: center; height: 30px; white-space: nowrap; margin-bottom: 2px; }
.month .fhead { height: 38px; margin-bottom: -2px; }
.fhead i { margin-right: 8px; border: 4px solid transparent; border-top: 5px solid #444; border-bottom: 0; }
.fhead .kd { margin: 3px 13px 0 auto; }
.fgroup label { display: flex; align-items: center; height: 26px; }
.fgroup label svg { width: 12px; height: 12px; margin-right: 8px; }

/* Dashboard */
.stage { width: 1148px; margin-left: 2px; height: 521px; background: #ebebeb; border-right: 1px solid #ddd; }
.board { height: 462px; padding: 4px 4px 4px 5px; }
.row { display: flex; gap: 4px; margin-bottom: 4px; }
.card { height: 42px; background: #fff; border-radius: 1px; }
.logo { width: 57px; }
.title { width: 793px; text-align: center; font-size: 27px; font-weight: bold; line-height: 36px; color: #000; letter-spacing: -.18px; }
.date { width: 280px; padding: 4px 7px 0 0; text-align: right; font-size: 12px; line-height: 14px; color: #666a70; letter-spacing: 0; }
.kpi { position: relative; display: flex; flex-direction: column; align-items: center; height: 75px; padding-top: 17px; white-space: nowrap; }
.kpi b { font-size: 13px; line-height: 16px; color: #6a6e74; letter-spacing: .15px; }
.kpi > span { font-size: 27px; line-height: 36px; color: #000; }
.k1 { width: 285px; } .k2 { width: 291px; } .k3 { width: 269px; } .k4 { width: 281px; }
.selected { box-shadow: 0 0 0 2px #3a8ee3; border-radius: 2px; }
.kbtns { position: absolute; right: 6px; top: 2px; display: flex; gap: 10px; }
.kbtns svg { width: 16px; height: 16px; border: 1px solid #d3d3d3; border-radius: 2px; background: #fff; }
.r3 { height: 329px; }
.panel { position: relative; background: #fff; }
.panel h2 { margin: 0; height: 28px; background: #1a5099; color: #fff; font-size: 16px; line-height: 27px; text-align: center; white-space: nowrap; letter-spacing: .04px; }
.owning { width: 286px; height: 329px; }
.panel.owning h2 { padding-right: 5px; }
.right { display: flex; flex-direction: column; gap: 4px; width: 848px; }
.charts { display: flex; gap: 4px; }
.stream { width: 437px; height: 158px; }
.controls { width: 407px; height: 158px; }
.chart .hd { font-weight: bold; font-size: 12px; fill: #666a70; }
.controls .chart .hd { font-size: 11px; }
.lbl { font-size: 12px; fill: #666a70; }

/* Highlight frames drawn over the dashboard */
.mark { position: absolute; border: 3px solid #ed1c24; }
.m1 { left: 23px; top: 9px; width: 228px; height: 63px; }
.m2 { left: 104px; top: 41px; width: 166px; height: 250px; }
.m3 { left: 95px; top: 30px; width: 246px; height: 108px; }
.m4 { left: 116px; top: 47px; width: 232px; height: 117px; z-index: 2; }

.details { height: 167px; overflow: hidden; }
.grid { display: grid; grid-template-columns: 97px 121px 114px 106px 115px 91px 142px 114px; grid-template-rows: 79px 70px; }
.th { padding: 8px 2px 0 0; background: #f0f0f0; border-right: 1px solid #ccc; border-bottom: 1px solid #ccc; text-align: center; font-size: 12px; line-height: 13px; color: #666a70; letter-spacing: .3px; }
.td { padding: 6px 0 0 20px; border-right: 1px solid #ddd; font-size: 10.500px; line-height: 10px; color: #000; white-space: nowrap; }
.td:nth-child(15) { letter-spacing: -.1px; }

.pagetabs { display: flex; align-items: center; height: 32px; padding-left: 19px; background: #fafafa; border-top: 1px solid #bdbdbd; border-bottom: 1px solid #bdbdbd; font-size: 12px; color: #333; }
.pagetabs span { white-space: nowrap; margin-top: 1px; }
.pagetabs .cur { width: 63px; height: 31px; margin-top: 0; line-height: 29px; border-top: 2px solid #3a8fe8; color: #3a7fe8; }
.pagetabs .kd { margin-left: 5px; }
.pagetabs i { width: 1px; height: 16px; margin-left: 8px; background: #bbb; }
.pagetabs .p1 { margin-left: 18px; width: 54px; }
.pagetabs .p2 { margin-left: 18px; width: 70px; }
.pagetabs .p3 { margin-left: 18px; width: 132px; }
.add { width: 10px; height: 10px; margin: 0 5px 0 13px; color: #444; }
.chapters { display: flex; align-items: center; height: 27px; background: #e6e8e7; font-size: 12px; color: #333; letter-spacing: .05px; }
.view { display: flex; align-items: center; width: 70px; padding-left: 13px; }
.view svg { width: 16px; height: 14px; }
.view .cv { width: 10px; height: 10px; margin-left: 8px; }
.view i { width: 1px; height: 16px; margin-left: 11px; background: #bbb; }
.chap { display: flex; align-items: center; align-self: flex-start; width: 161px; height: 25px; margin-top: -1px; padding: 3px 0 0 18px; background: #fafafa; border: 1px solid #bbb; border-top: 0; font-weight: bold; white-space: nowrap; color: #444; letter-spacing: .1px; }
.chap .kd { margin-left: auto; margin-right: 7px; }

/* Desktop taskbar */
.taskbar { display: flex; height: 40px; background: #222427; color: #fff; }
.start { display: grid; place-items: center; width: 48px; }
.start svg { width: 16px; height: 16px; }
.find { display: flex; align-items: center; width: 344px; padding-left: 9px; background: #f2f2f2; border-top: 1px solid #ccc; font: 14px "Open Sans", sans-serif; color: #222; letter-spacing: -.05px; }
.ring { width: 21px; height: 21px; border: 3px solid #000; border-radius: 50%; }
.find span { margin-left: 10px; }
.find svg { width: 12px; height: 18px; margin: 0 15px 0 auto; }
.tv { width: 50px; padding: 11px 0 0 16px; }
.tv svg { width: 18px; height: 18px; }
.apps { display: flex; }
.apps div { width: 45px; padding: 8px 0 0 11px; background: linear-gradient(#76b5ef, #76b5ef) 5px 38px / 36px 2px no-repeat; }
.apps svg { width: 24px; height: 24px; overflow: visible; }
.apps .hot { background-color: #55575a; }
.apps .warm { background-color: #3b3d40; }
.tray { display: flex; align-items: center; margin-left: 24px; }
.people { width: 17px; height: 17px; }
.up { width: 12px; height: 8px; margin-left: 22px; }
.mail { width: 13px; height: 10px; margin-left: 11px; }
.cloud { width: 16px; height: 11px; margin-left: 10px; }
.batt { width: 16px; height: 13px; margin-left: 8px; }
.wifi { width: 13px; height: 13px; margin-left: 11px; }
.clock { display: flex; flex-direction: column; align-items: center; width: 60px; margin: -2px 0 0 6px; font: 12px/17px "Open Sans", sans-serif; letter-spacing: -.4px; }
.note { width: 17px; height: 17px; margin-left: 14px; }
```
